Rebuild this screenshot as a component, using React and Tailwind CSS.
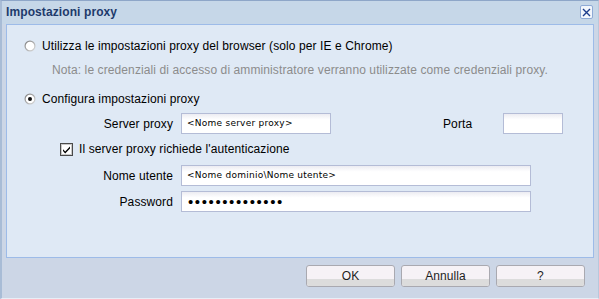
import React from "react";

function Radio({ checked }) {
  return (
    <svg width="12" height="12" viewBox="0 0 12 12" className="shrink-0">
      <defs>
        <linearGradient id={checked ? "rg1" : "rg0"} x1="0" y1="0" x2="1" y2="1">
          <stop offset="0" stopColor="#7a7a7a" />
          <stop offset="1" stopColor="#e0e0e0" />
        </linearGradient>
      </defs>
      <circle cx="6" cy="6" r="5.5" fill={`url(#${checked ? "rg1" : "rg0"})`} />
      <circle cx="6" cy="6" r="4.3" fill="#ffffff" />
      {checked && <circle cx="6" cy="6" r="2" fill="#111" />}
    </svg>
  );
}

function Checkbox() {
  return (
    <svg width="13" height="13" viewBox="0 0 13 13" className="shrink-0">
      <rect x="0.5" y="0.5" width="12" height="12" fill="#ffffff" stroke="#4a4a4a" />
      <rect x="1.5" y="1.5" width="10" height="10" fill="none" stroke="#c8c8c8" />
      <path d="M3 6.2 L5.2 8.6 L10 3.6 L10 5.4 L5.2 10.4 L3 8 Z" fill="#000" />
    </svg>
  );
}

function Input({ w, children }) {
  return (
    <div
      className={`${w} h-[21px] border border-[#b4bcd6] bg-gradient-to-b from-[#ececf2] via-white via-[30%] to-white flex items-center pl-[5px] text-black`}
    >
      {children}
    </div>
  );
}

function Btn({ children }) {
  return (
    <div className="w-[89px] h-[22px] rounded-[3px] border border-[#a9a9b0] bg-[#f6f2f6] relative overflow-hidden flex items-center justify-center">
      <div className="absolute left-0 right-0 bottom-0 h-[7px] bg-[#dcdcdc]" />
      <span className="relative text-[12px] text-[#1e1e1e] leading-none -mt-[1px]">{children}</span>
    </div>
  );
}

export default function App() {
  const small = "font-['DejaVu_Sans',sans-serif] text-[9px] tracking-[0.25px]";
  return (
    <div className="w-[599px] h-[299px] bg-[#ccd6e6] border-t border-t-[#8ea6c8] border-l-2 border-l-[#a8bcd6] border-r border-r-[#b8c8dc] border-b border-b-[#e8eef6] flex flex-col font-['Liberation_Sans',Arial,sans-serif] text-[12px] tracking-[0.1px] text-black overflow-hidden">
      <div className="h-[23px] shrink-0 bg-[#c6d7e8] flex items-center justify-between pl-[4px] pr-[5px]">
        <span className="font-bold text-[12px] tracking-[0.1px] text-[#1d3a6b] -mt-[2px]">Impostazioni proxy</span>
        <div className="w-[13px] h-[14px] rounded-[2px] border border-[#8eaad6] bg-[#f2f6fc] flex items-center justify-center -mt-[1px]">
          <svg width="9" height="9" viewBox="0 0 9 9">
            <path d="M1 1 L8 8 M8 1 L1 8" stroke="#1c3c8c" strokeWidth="1.4" />
          </svg>
        </div>
      </div>
      <div className="mx-[4px] h-[234px] shrink-0 bg-[#dfe9f5] border border-[#9dbbe8] pt-[13px] flex flex-col">
        <div className="h-[16px] flex items-center pl-[17px] gap-[6px]">
          <Radio checked={false} />
          <span>Utilizza le impostazioni proxy del browser (solo per IE e Chrome)</span>
        </div>
        <div className="h-[16px] mt-[8px] flex items-center pl-[45px] text-[#8c8c8c]">
          Nota: le credenziali di accesso di amministratore verranno utilizzate come credenziali proxy.
        </div>
        <div className="h-[16px] mt-[13px] flex items-center pl-[17px] gap-[6px]">
          <Radio checked={true} />
          <span>Configura impostazioni proxy</span>
        </div>
        <div className="mt-[6px] flex items-center">
          <div className="w-[166px] text-right">Server proxy</div>
          <div className="ml-[8px]">
            <Input w="w-[150px]">
              <span className={small}>&lt;Nome server proxy&gt;</span>
            </Input>
          </div>
          <div className="ml-[112px] w-[60px]">Porta</div>
          <Input w="w-[60px]" />
        </div>
        <div className="h-[16px] mt-[7px] flex items-center pl-[53px] gap-[6px]">
          <Checkbox />
          <span>Il server proxy richiede l'autenticazione</span>
        </div>
        <div className="mt-[8px] flex items-center">
          <div className="w-[166px] text-right">Nome utente</div>
          <div className="ml-[8px]">
            <Input w="w-[350px]">
              <span className={small}>&lt;Nome dominio\Nome utente&gt;</span>
            </Input>
          </div>
        </div>
        <div className="mt-[5px] flex items-center">
          <div className="w-[166px] text-right">Password</div>
          <div className="ml-[8px]">
            <Input w="w-[350px]">
              <span className="text-[15px] tracking-[1.6px] leading-none pl-[1px]">••••••••••••••</span>
            </Input>
          </div>
        </div>
      </div>
      <div className="flex justify-end gap-[6px] pt-[7px] pr-[13px]">
        <Btn>OK</Btn>
        <Btn>Annulla</Btn>
        <Btn>?</Btn>
      </div>
    </div>
  );
}
